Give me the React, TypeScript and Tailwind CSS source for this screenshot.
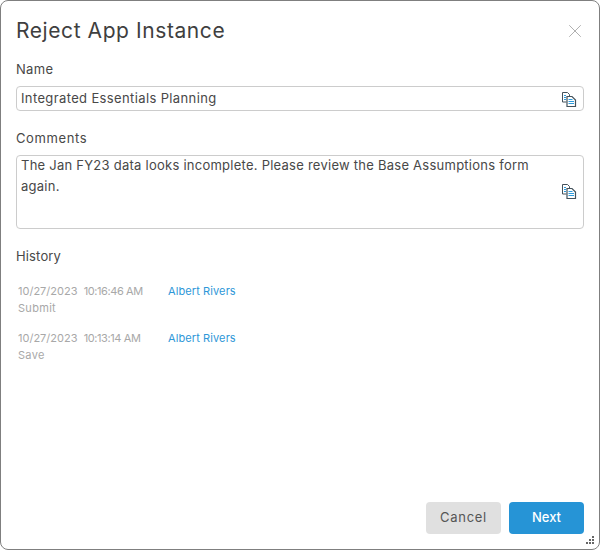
import { X } from 'lucide-react';

const font = "font-['Inter','Noto_Sans',sans-serif]";

function CopyIcon({ className = '' }: { className?: string }) {
  return (
    <svg width="16" height="16" viewBox="0 0 16 16" fill="none" className={`shrink-0 ${className}`}>
      <path d="M1.5 1.5h5l2 2v2M1.5 1.5v9.5h4" stroke="#44525c" strokeWidth="1" />
      <path d="M6 5.5h5l3.5 3.5v6.5H6z" fill="#fff" stroke="#44525c" strokeWidth="1.2" />
      <path d="M3 4.5h2M3 6.5h2M3 8.5h2" stroke="#2d9bdc" strokeWidth="1" />
      <path d="M7.5 8.5h4M7.5 10.5h5.5M7.5 12.5h5.5" stroke="#2d9bdc" strokeWidth="1" />
    </svg>
  );
}

function HistoryRow({ date, time, user, action }: { date: string; time: string; user: string; action: string }) {
  return (
    <div className="pl-0.5 text-[11px] leading-[17px]">
      <div className="flex">
        <span className="w-[150px] text-[#a8a8a8]">
          {date}&nbsp;&nbsp;<span className="tracking-[-0.4px]">{time}</span>
        </span>
        <span className="tracking-[0.1px] text-[#2e97d8]">{user}</span>
      </div>
      <div className="tracking-[0.3px] text-[#a8a8a8]">{action}</div>
    </div>
  );
}

export default function App() {
  return (
    <div className={`${font} relative flex h-[550px] w-[600px] flex-col rounded-lg border border-[#7f7f7f] bg-white px-[15px] text-[#484848]`}>
      <div className="flex items-center justify-between pt-[16px]">
        <h1 className="text-[21px] leading-[28px] tracking-[0.58px] text-[#3f3f3f]">Reject App Instance</h1>
        <X className="mr-[-1.5px] text-[#a8a8a8]" size={22} strokeWidth={1} />
      </div>

      <label className="mt-[15px] text-[13px] leading-[18px] tracking-[0.3px]">Name</label>
      <div className="mt-[8px] flex h-[25px] items-center justify-between rounded border border-[#cccccc] pl-1 pr-1.5 text-[13px] tracking-[0.37px]">
        <span>Integrated Essentials Planning</span>
        <CopyIcon />
      </div>

      <label className="mt-[18px] text-[13px] leading-[18px] tracking-[0.6px]">Comments</label>
      <div className="mt-[8px] flex h-[74px] items-center justify-between rounded border border-[#cccccc] pl-1 pr-1.5 text-[13px] leading-[21px] tracking-[0.25px]">
        <p className="-mt-px w-[530px] self-start">
          The Jan FY23 data looks incomplete. Please review the Base Assumptions form again.
        </p>
        <CopyIcon className="mb-[2px]" />
      </div>

      <label className="mt-[18px] text-[13px] leading-[18px] tracking-[0.15px]">History</label>
      <div className="mt-[18px] flex flex-col gap-[13px]">
        <HistoryRow date="10/27/2023" time="10:16:46 AM" user="Albert Rivers" action="Submit" />
        <HistoryRow date="10/27/2023" time="10:13:14 AM" user="Albert Rivers" action="Save" />
      </div>

      <div className="mt-auto flex justify-end gap-2 pb-[15px]">
        <button className="h-8 w-[75px] rounded bg-[#e0e0e0] text-[13px] tracking-[0.7px] text-[#555555]">Cancel</button>
        <button className="h-8 w-[75px] rounded bg-[#2694d6] text-[13px] font-medium text-white">Next</button>
      </div>

      <svg width="10" height="10" viewBox="0 0 10 10" className="absolute bottom-[4px] right-[4px]" fill="#666666">
        <rect x="7" y="1" width="2" height="2" />
        <rect x="4" y="4" width="2" height="2" />
        <rect x="7" y="4" width="2" height="2" />
        <rect x="1" y="7" width="2" height="2" />
        <rect x="4" y="7" width="2" height="2" />
        <rect x="7" y="7" width="2" height="2" />
      </svg>
    </div>
  );
}
